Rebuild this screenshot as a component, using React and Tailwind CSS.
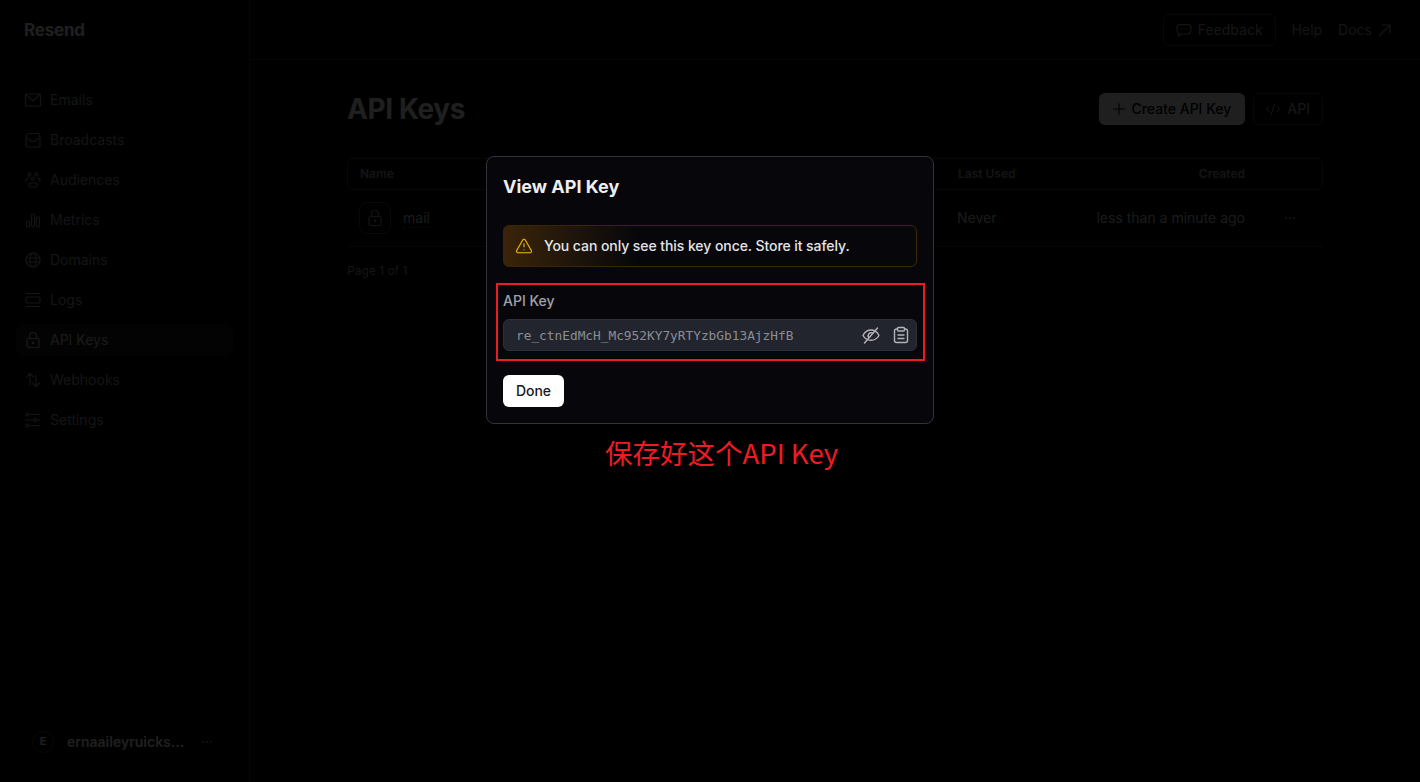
import React from 'react';
import { Code2, Plus, TriangleAlert } from 'lucide-react';

const Icon = ({ children }) => (
  <svg width="18" height="18" viewBox="0 0 18 18" fill="none" stroke="currentColor" strokeWidth="1.2" strokeLinecap="round" strokeLinejoin="round" className="shrink-0">
    {children}
  </svg>
);

const LockPaths = () => (
  <>
    <rect x="3" y="7.500" width="12" height="9" rx="1.500" />
    <path d="M5.500 7.500V5a3.500 3.500 0 0 1 7 0v2.500" />
    <circle cx="9" cy="12" r=".6" />
  </>
);

const navItems = [
  { label: 'Emails', icon: <><rect x="1.500" y="3" width="15" height="12" rx="1" /><path d="M2 3.500l7 6.500 7-6.500" /></> },
  { label: 'Broadcasts', icon: <><path d="M4.500 2.500h9a2 2 0 0 1 2 1.800l.5 3.700v6a2 2 0 0 1-2 2H4a2 2 0 0 1-2-2V8l.5-3.700a2 2 0 0 1 2-1.800z" /><path d="M2 8h3.500l1.500 2.500h4L12.500 8H16" /></> },
  { label: 'Audiences', icon: <><circle cx="5.500" cy="3.500" r="1.600" /><circle cx="12.500" cy="3.500" r="1.600" /><circle cx="9" cy="8" r="1.500" /><path d="M2 10.500c0-2.300 1-3.500 2.500-3.500M16 10.500c0-2.300-1-3.500-2.500-3.500" /><rect x="5" y="12" width="8" height="4" rx="1.500" /></> },
  { label: 'Metrics', icon: <><rect x="2.500" y="10" width="3" height="6" rx="1" /><rect x="7.500" y="3" width="3" height="13" rx="1.500" /><rect x="12.500" y="6" width="3" height="10" rx="1" /></> },
  { label: 'Domains', icon: <><circle cx="9" cy="9" r="7" /><ellipse cx="9" cy="9" rx="3" ry="7" /><path d="M2 7h14M2 11h14" /></> },
  { label: 'Logs', icon: <><path d="M2 2.500h14M2 15.500h14" /><rect x="2" y="6" width="14" height="6" rx="1" /></> },
  { label: 'API Keys', active: true, icon: <LockPaths /> },
  { label: 'Webhooks', icon: <><path d="M6 14V3M2.500 6L6 2.500 9.500 6" /><path d="M12 4v11M8.500 12l3.500 3.500 3.500-3.500" /></> },
  { label: 'Settings', icon: <><path d="M6 3.500h10M2 9h7M13 9h3M6 14.500h10" /><circle cx="3.500" cy="3.500" r="1.500" /><circle cx="11" cy="9" r="1.500" /><circle cx="3.500" cy="14.500" r="1.500" /></> },
];

const Dots = () => (
  <svg width="12" height="4" viewBox="0 0 12 4" fill="currentColor" className="shrink-0">
    <circle cx="2" cy="2" r="1" />
    <circle cx="6" cy="2" r="1" />
    <circle cx="10" cy="2" r="1" />
  </svg>
);

const ClipboardIcon = () => (
  <svg width="18" height="18" viewBox="0 0 18 18" fill="none" stroke="currentColor" strokeWidth="1.400" strokeLinecap="round" strokeLinejoin="round">
    <path d="M5.500 3H4.500A2 2 0 0 0 2.500 5v9.500a2 2 0 0 0 2 2h9a2 2 0 0 0 2-2V5a2 2 0 0 0-2-2h-1" />
    <rect x="5.500" y="1.500" width="7" height="3.500" rx="1" />
    <path d="M6 9h6M6 12.500h6" />
  </svg>
);

const EyeSlashIcon = () => (
  <svg width="18" height="18" viewBox="0 0 18 18" fill="none" stroke="currentColor" strokeWidth="1.400" strokeLinecap="round" strokeLinejoin="round">
    <path d="M1 9.500c1.800-3.700 4.500-5.500 8-5.500s6.200 1.800 8 5.500c-1.800 3.200-4.500 4.800-8 4.800s-6.200-1.600-8-4.800z" />
    <path d="M6.800 11.500a3 3 0 0 1 3.700-4.500" />
    <path d="M2.500 17L15.500 2" />
  </svg>
);

const FeedbackIcon = () => (
  <svg width="16" height="16" viewBox="0 0 16 16" fill="none" stroke="currentColor" strokeWidth="1.200" strokeLinecap="round" strokeLinejoin="round" className="shrink-0">
    <path d="M4.500 2.500h7a3.500 3.500 0 0 1 3.500 3.500v2.500a3.500 3.500 0 0 1-3.500 3.500H5l-2.500 2v-3A3.500 3.500 0 0 1 1 8.500V6a3.500 3.500 0 0 1 3.500-3.500z" />
    <path d="M5.200 7.200h.1M8 7.200h.1M10.800 7.200h.1" />
  </svg>
);

const Sidebar = () => (
  <aside className="flex w-[250px] shrink-0 flex-col border-r border-white/20 px-4">
    <div className="flex h-[60px] items-center pt-[2px] pl-2 text-[17px] font-bold tracking-[-0.2px] text-white">Resend</div>
    <nav className="mt-6 flex flex-col gap-2">
      {navItems.map((item) => (
        <div
          key={item.label}
          className={`flex h-8 w-[217px] items-center gap-2 rounded-lg pl-2 text-sm ${item.active ? 'bg-white/10 text-[#d4d4d8]' : 'text-[#a1a1aa]'}`}
        >
          <Icon>{item.icon}</Icon>
          {item.label}
        </div>
      ))}
    </nav>
    <div className="mt-auto mb-5 flex h-10 items-center pl-4 text-sm font-semibold text-white">
      <div className="flex h-[22px] w-[22px] items-center justify-center rounded-full border border-white/25 text-[11px]">E</div>
      <span className="ml-[13px] whitespace-nowrap">ernaaileyruicks...</span>
      <span className="ml-[17px] text-[#a1a1aa]"><Dots /></span>
    </div>
  </aside>
);

const Topbar = () => (
  <header className="flex h-[60px] items-center justify-end border-b border-white/20 pr-[28px] text-sm text-[#a1a1aa]">
    <div className="flex h-8 items-center gap-[6px] rounded-md border border-white/25 px-3 text-white/70">
      <FeedbackIcon />
      Feedback
    </div>
    <span className="ml-4">Help</span>
    <span className="ml-4">Docs</span>
    <svg width="14" height="14" viewBox="0 0 14 14" fill="none" stroke="currentColor" strokeWidth="1.200" strokeLinecap="round" strokeLinejoin="round" className="ml-[6px]">
      <path d="M1.500 12.500L12 2M4 2h8v8" />
    </svg>
  </header>
);

const KeysTable = () => (
  <div className="mt-8">
    <div className="grid h-8 grid-cols-[610px_138px_150px_1fr] items-center rounded-md border border-white/25 text-xs font-semibold text-[#a1a1aa]">
      <span className="pl-3">Name</span>
      <span>Last Used</span>
      <span className="pr-[1px] text-right">Created</span>
      <span />
    </div>
    <div className="grid h-[57px] grid-cols-[610px_138px_150px_1fr] items-center border-b border-white/20 text-sm text-[#d4d4d8]">
      <div className="flex items-center pl-3">
        <div className="flex h-8 w-8 items-center justify-center rounded-lg border border-white/30 text-[#a1a1aa]">
          <Icon><LockPaths /></Icon>
        </div>
        <span className="ml-3 border-b border-dashed border-white/30 leading-[18px]">mail</span>
      </div>
      <span>Never</span>
      <span className="justify-self-end whitespace-nowrap">less than a minute ago</span>
      <span className="ml-[39px] text-[#a1a1aa]"><Dots /></span>
    </div>
    <p className="mt-4 text-xs text-[#a1a1aa]">Page 1 of 1</p>
  </div>
);

const Page = () => (
  <div className="flex h-[782px] w-[1420px] overflow-hidden bg-black">
    <Sidebar />
    <div className="flex-1">
      <Topbar />
      <main className="mx-auto w-[976px] pt-8">
        <div className="flex h-[34px] items-center justify-between">
          <h1 className="text-[28px] font-bold tracking-[-0.4px] text-white">API Keys</h1>
          <div className="flex items-center gap-2">
            <div className="flex h-8 items-center gap-[3px] rounded-md bg-white pr-[14px] pl-[11px] text-sm font-medium text-black">
              <Plus className="h-[18px] w-[18px]" strokeWidth={1.500} />
              Create API Key
            </div>
            <div className="flex h-8 items-center gap-[6px] rounded-md border border-white/25 pr-3 pl-[11px] text-sm font-medium text-white/70">
              <Code2 className="h-4 w-4" strokeWidth={1.500} />
              API
            </div>
          </div>
        </div>
        <KeysTable />
      </main>
    </div>
  </div>
);

const Modal = () => (
  <div className="absolute top-[156px] left-[486px] w-[448px] rounded-lg border border-[#30333a] bg-[#07070b] p-4">
    <h2 className="h-[28px] text-[18px] leading-[28px] font-bold text-[#eeeef0]">View API Key</h2>
    <div className="mt-6 flex h-[42px] items-center rounded-md border border-[#3b2708] bg-[linear-gradient(90deg,#3a2409_0%,#07070b_32%)] pl-[11px] text-sm font-medium tracking-[-0.07px] text-[#e4e4e7]">
      <TriangleAlert className="h-[18px] w-[18px] text-[#f5b70a]" strokeWidth={1.500} />
      <span className="ml-[11px]">You can only see this key once. Store it safely.</span>
    </div>
    <div className="mt-6 text-sm leading-5 font-medium text-[#a1a1aa]">API Key</div>
    <div className="mt-2 flex h-8 items-center rounded-md border border-[#2d3038] bg-[#22252d] pr-[6px] pl-3 text-[#8b8d94]">
      <span className="flex-1 pt-[1px] text-[12.800px]" style={{ fontFamily: '"DejaVu Sans Mono", monospace' }}>re_ctnEdMcH_Mc952KY7yRTYzbGb13AjzHfB</span>
      <span className="text-[#b4b4b8]"><EyeSlashIcon /></span>
      <span className="ml-3 text-[#b4b4b8]"><ClipboardIcon /></span>
    </div>
    <button className="mt-6 flex h-8 w-[61px] items-center justify-center rounded-md bg-white text-sm font-medium text-[#18181b]">Done</button>
  </div>
);

export default function App() {
  return (
    <div className="relative h-[782px] w-[1420px] overflow-hidden" style={{ fontFamily: 'Inter, sans-serif' }}>
      <Page />
      <div className="absolute inset-0 bg-black/88" />
      <Modal />
      {/* annotation drawn over the screenshot */}
      <div className="absolute top-[283px] left-[496px] h-[78px] w-[429px] border-2 border-[#ed1c24]" />
      <div className="absolute top-[433px] left-[605px] text-[27.500px] leading-[38px] whitespace-nowrap text-[#ed1c24]" style={{ fontFamily: '"Noto Sans CJK SC", "Noto Sans", sans-serif' }}>
        保存好这个API Key
      </div>
    </div>
  );
}
